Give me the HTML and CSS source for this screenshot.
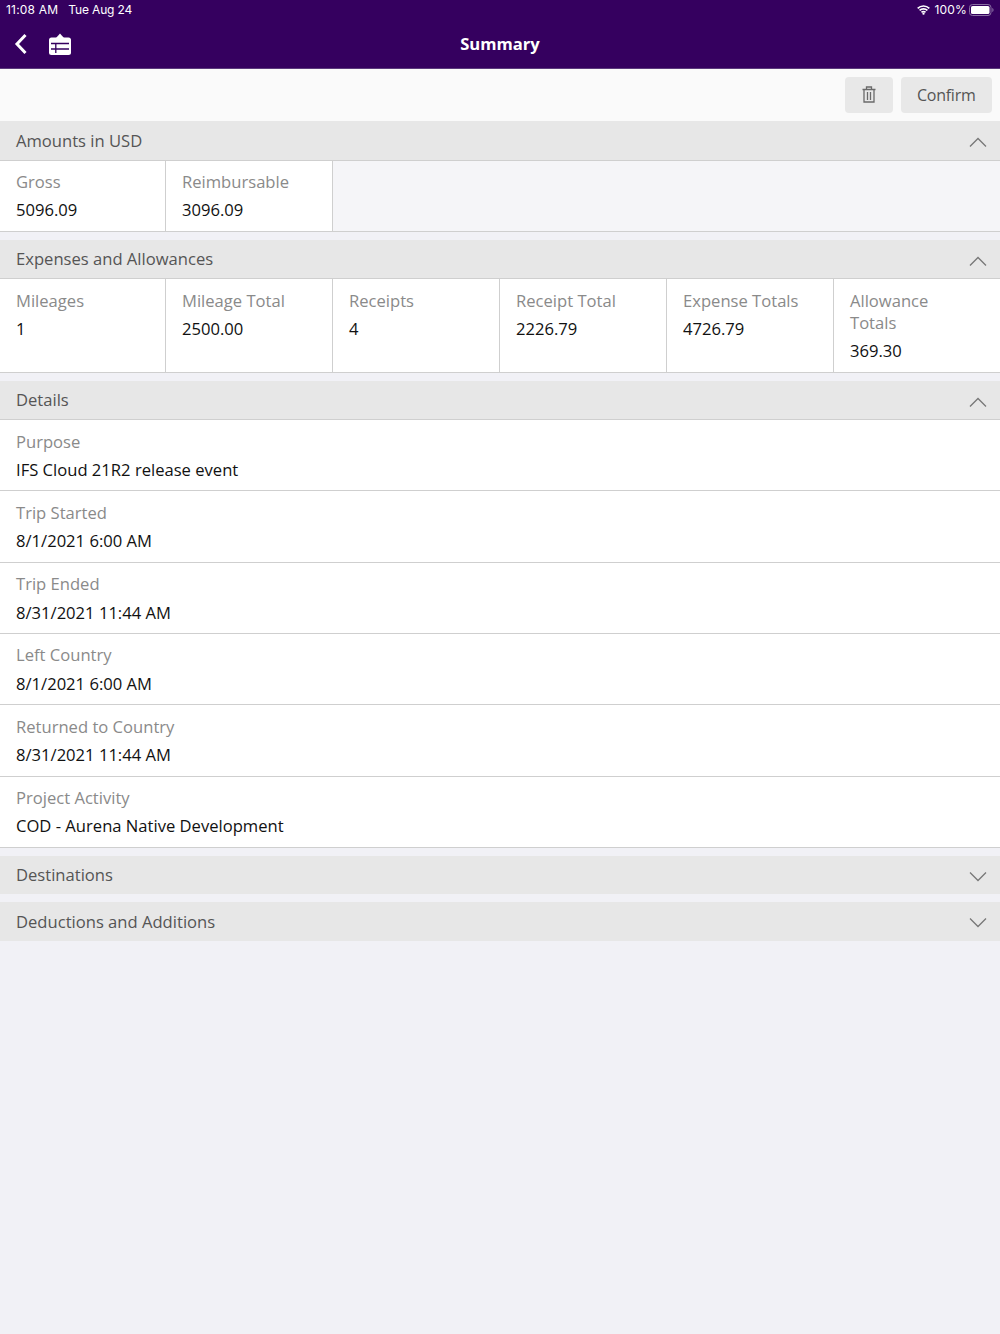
FILE: index.html
```html
<!DOCTYPE html>
<html lang="en">
<head>
<meta charset="utf-8">
<title>Summary</title>
<link rel="stylesheet" href="styles.css">
</head>
<body>
<header class="topbar">
  <div class="status">
    <div class="status-left"><span class="time">11:08 AM</span><span class="date">Tue Aug 24</span></div>
    <div class="status-right">
      <svg class="wifi" width="13" height="10" viewBox="0 0 15 11"><path d="M.8 3.600a9.600 9.600 0 0 1 13.400 0M3 6a6.400 6.400 0 0 1 9 0M5.200 8.200a3.200 3.200 0 0 1 4.600 0" fill="none" stroke="#fff" stroke-width="1.900"/><circle cx="7.500" cy="9.700" r="1.300" fill="#fff"/></svg>
      <span>100%</span>
      <svg class="battery" width="25" height="12" viewBox="0 0 25 12"><rect x=".5" y=".5" width="21.5" height="11" rx="3" fill="none" stroke="#8a6fa3"/><rect x="2" y="2" width="18.500" height="8" rx="1.600" fill="#fff"/><path d="M23.300 4v4c.8-.3 1.200-1.100 1.200-2s-.4-1.700-1.200-2z" fill="#8a6fa3"/></svg>
    </div>
  </div>
  <nav class="nav">
    <svg class="back" width="14" height="22" viewBox="0 0 14 22"><path d="M11.500 2 3 11l8.500 9" fill="none" stroke="#fff" stroke-width="3"/></svg>
    <svg class="sheet" width="22" height="22" viewBox="0 0 22 22"><path d="M7 5 11 .5 15 5z" fill="#fff"/><rect x="0" y="4.500" width="22" height="17.500" rx="2.500" fill="#fff"/><path d="M2 10.500h18M2 16h18M6.800 10.500V20" stroke="#35005f" stroke-width="1.300" fill="none"/></svg>
    <h1 class="title">Summary</h1>
  </nav>
</header>
<div class="toolbar">
  <button class="btn btn-icon" aria-label="Delete"><svg width="14" height="17" viewBox="0 0 14 17"><path d="M.5 3.500h13M4.500 3.500V1h5v2.500M2 3.500V16h10V3.500M5.500 6v8M8.500 6v8" fill="none" stroke="#6a6a6a" stroke-width="1.300"/></svg></button>
  <button class="btn btn-text">Confirm</button>
</div>
<main>
  <section class="group">
    <div class="head"><span>Amounts in USD</span><svg class="chev" width="18" height="10" viewBox="0 0 18 10"><path d="M1 9.500 9 1.500l8 8" fill="none" stroke="#777" stroke-width="1.300"/></svg></div>
    <div class="cells">
      <div class="cell"><div class="label">Gross</div><div class="value">5096.09</div></div>
      <div class="cell"><div class="label">Reimbursable</div><div class="value">3096.09</div></div>
    </div>
  </section>
  <section class="group">
    <div class="head"><span>Expenses and Allowances</span><svg class="chev" width="18" height="10" viewBox="0 0 18 10"><path d="M1 9.500 9 1.500l8 8" fill="none" stroke="#777" stroke-width="1.300"/></svg></div>
    <div class="cells">
      <div class="cell"><div class="label">Mileages</div><div class="value">1</div></div>
      <div class="cell"><div class="label">Mileage Total</div><div class="value">2500.00</div></div>
      <div class="cell"><div class="label">Receipts</div><div class="value">4</div></div>
      <div class="cell"><div class="label">Receipt Total</div><div class="value">2226.79</div></div>
      <div class="cell"><div class="label">Expense Totals</div><div class="value">4726.79</div></div>
      <div class="cell"><div class="label">Allowance Totals</div><div class="value">369.30</div></div>
    </div>
  </section>
  <section class="group">
    <div class="head"><span>Details</span><svg class="chev" width="18" height="10" viewBox="0 0 18 10"><path d="M1 9.500 9 1.500l8 8" fill="none" stroke="#777" stroke-width="1.300"/></svg></div>
    <div class="row"><div class="label">Purpose</div><div class="value">IFS Cloud 21R2 release event</div></div>
    <div class="row"><div class="label">Trip Started</div><div class="value">8/1/2021 6:00 AM</div></div>
    <div class="row"><div class="label">Trip Ended</div><div class="value">8/31/2021 11:44 AM</div></div>
    <div class="row"><div class="label">Left Country</div><div class="value">8/1/2021 6:00 AM</div></div>
    <div class="row"><div class="label">Returned to Country</div><div class="value">8/31/2021 11:44 AM</div></div>
    <div class="row"><div class="label">Project Activity</div><div class="value">COD - Aurena Native Development</div></div>
  </section>
  <section class="group">
    <div class="head head-closed"><span>Destinations</span><svg class="chev" width="18" height="10" viewBox="0 0 18 10"><path d="M1 .500l8 8 8-8" fill="none" stroke="#777" stroke-width="1.300"/></svg></div>
  </section>
  <section class="group">
    <div class="head head-closed"><span>Deductions and Additions</span><svg class="chev" width="18" height="10" viewBox="0 0 18 10"><path d="M1 .500l8 8 8-8" fill="none" stroke="#777" stroke-width="1.300"/></svg></div>
  </section>
</main>
</body>
</html>
```
FILE: styles.css
```css
* { box-sizing: border-box; }
html, body { margin: 0; height: 100%; }
body {
  background: #f1f1f6;
  font-family: "Open Sans", sans-serif;
  font-size: 16.6px;
  color: #000;
  overflow: hidden;
}
.topbar {
  height: 69px;
  background: #35005f;
  color: #fff;
  border-bottom: 1px solid #5b3a7c;
}
.status {
  height: 20px;
  padding: 0 6px 1px 6px;
  display: flex;
  justify-content: space-between;
  align-items: center;
  font-family: Inter, sans-serif;
  font-size: 12px;
}
.status-left { display: flex; gap: 10px; }
.time { letter-spacing: .2px; }
.date { letter-spacing: -.15px; }
.status-right { display: flex; align-items: center; gap: 2px; letter-spacing: .2px; }
.wifi { margin-right: 2px; }
.nav {
  position: relative;
  height: 48px;
  padding: 0 0 1px 14px;
  display: flex;
  align-items: center;
  gap: 21px;
}
.title {
  position: absolute;
  left: 0;
  right: 0;
  margin: 0;
  text-align: center;
  font-size: 16.6px;
  font-weight: 700;
}
.toolbar {
  height: 52px;
  background: #fafafa;
  padding: 7.5px 8.5px 0 0;
  display: flex;
  justify-content: flex-end;
  gap: 8px;
}
.btn {
  height: 36.5px;
  border: 0;
  border-radius: 4px;
  background: #e8e8e8;
  color: #555;
  font: inherit;
  display: flex;
  align-items: center;
  justify-content: center;
  padding: 0;
}
.btn-icon { width: 48.5px; }
.btn-text { width: 90.5px; font-size: 16px; letter-spacing: -.25px; }
.group { margin-bottom: 8px; }
.head {
  height: 39.6px;
  padding: 0 13px .6px 16px;
  background: #e7e7e7;
  border-bottom: 1px solid #cfcfcf;
  color: #555;
  display: flex;
  justify-content: space-between;
  align-items: center;
}
.head-closed { height: 38.6px; border-bottom: 0; }
.head .chev { margin-top: 4px; }
.cells {
  display: grid;
  grid-template-columns: 166px repeat(4, 167px) 1fr;
  background: #f5f5f8;
  border-bottom: 1px solid #cfcfcf;
}
.cell {
  background: #fff;
  padding: 10.3px 28px 9.2px 16px;
  border-right: 1px solid #cfcfcf;
}
.cell:nth-child(6) { border-right: 0; }
.label { color: #8a8a8a; line-height: 22.2px; }
.value { color: #111; line-height: 22.2px; margin-top: 6.2px; }
.row {
  background: #fff;
  padding: 10.5px 16px 9.2px;
  border-bottom: 1px solid #cfcfcf;
}
```
